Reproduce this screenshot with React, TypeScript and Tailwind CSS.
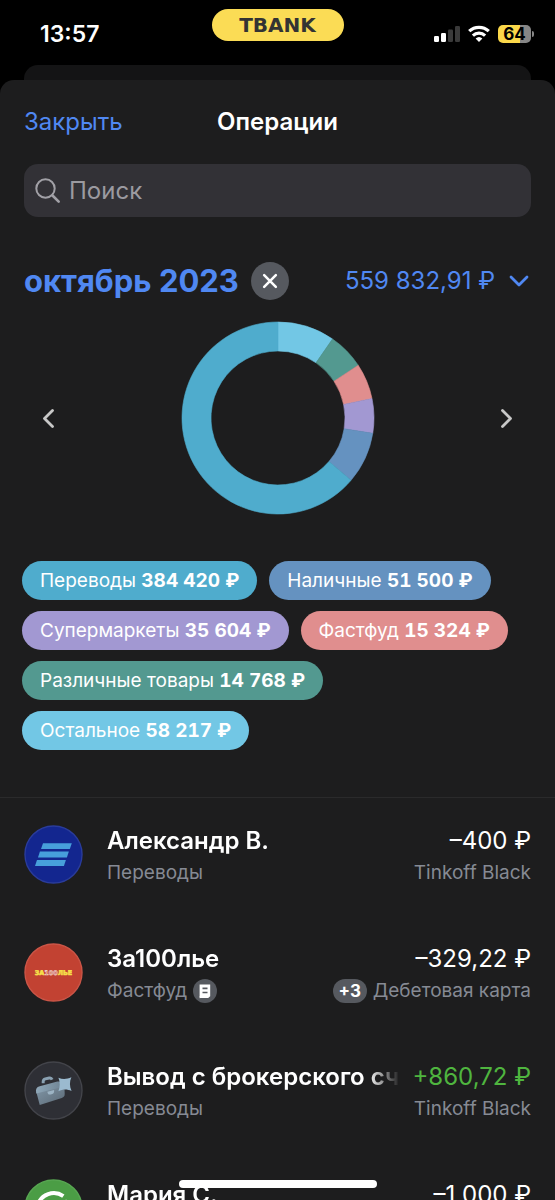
import type { ReactNode } from 'react'

interface Category {
  name: string
  amount: string
  chip: string
}

const CATEGORIES: Category[] = [
  { name: 'Переводы', amount: '384 420 ₽', chip: 'bg-[#4faccd]' },
  { name: 'Наличные', amount: '51 500 ₽', chip: 'bg-[#6592c0]' },
  { name: 'Супермаркеты', amount: '35 604 ₽', chip: 'bg-[#a298d2]' },
  { name: 'Фастфуд', amount: '15 324 ₽', chip: 'bg-[#e08e8e]' },
  { name: 'Различные товары', amount: '14 768 ₽', chip: 'bg-[#539990]' },
  { name: 'Остальное', amount: '58 217 ₽', chip: 'bg-[#72c7e5]' },
]

// Clockwise from twelve o'clock, small categories get a minimum visible angle
const SLICES = [
  { from: 0, to: 34.6, color: '#72c7e5' },
  { from: 34.6, to: 56.7, color: '#539990' },
  { from: 56.7, to: 78.3, color: '#e08e8e' },
  { from: 78.3, to: 99.2, color: '#a298d2' },
  { from: 99.2, to: 130.5, color: '#6592c0' },
  { from: 130.5, to: 360, color: '#4faccd' },
]

interface Operation {
  title: string
  amount: string
  income?: boolean
  category?: string
  account?: string
  receipt?: boolean
  bonus?: string
  logo: ReactNode
}

const OPERATIONS: Operation[] = [
  { title: 'Александр В.', amount: '–400 ₽', category: 'Переводы', account: 'Tinkoff Black', logo: <StripesLogo /> },
  {
    title: 'За100лье',
    amount: '–329,22 ₽',
    category: 'Фастфуд',
    account: 'Дебетовая карта',
    receipt: true,
    bonus: '+3',
    logo: <CanteenLogo />,
  },
  {
    title: 'Вывод с брокерского сч',
    amount: '+860,72 ₽',
    income: true,
    category: 'Переводы',
    account: 'Tinkoff Black',
    logo: <BriefcaseLogo />,
  },
  { title: 'Мария С.', amount: '–1 000 ₽', logo: <GreenLogo /> },
]

function StripesLogo() {
  return (
    <svg viewBox="0 0 60 60" className="size-[59px] shrink-0" aria-hidden="true">
      <circle cx="30" cy="30" r="29" fill="#13268f" stroke="#2a3c9b" strokeWidth="1.4" />
      <g fill="#479fdb">
        <path d="M19.3 18.6H48.600l-2 5.800H17.300z" />
        <path d="M16.200 27H45.600l-2 6H14.200z" />
        <path d="M13.200 35.600H42.600l-2 6.200H11.200z" />
      </g>
    </svg>
  )
}

function CanteenLogo() {
  return (
    <svg viewBox="0 0 60 60" className="size-[59px] shrink-0" aria-hidden="true">
      <circle cx="30" cy="30" r="29" fill="#c24232" stroke="#cb5547" strokeWidth="1.4" />
      <text
        x="30"
        y="32.6"
        textAnchor="middle"
        fontFamily="DejaVu Sans, sans-serif"
        fontWeight="700"
        fontSize="6.5"
        fill="#f6df4a"
        stroke="#f6df4a"
        strokeWidth="0.6"
      >
        ЗА
        <tspan fill="#c24232" stroke="#f3d9d0">
          100
        </tspan>
        ЛЬЕ
      </text>
    </svg>
  )
}

function BriefcaseLogo() {
  return (
    <svg viewBox="0 0 60 60" className="size-[59px] shrink-0" aria-hidden="true">
      <defs>
        <linearGradient id="case-body" x1="0" y1="0" x2="1" y2="1">
          <stop offset="0" stopColor="#8298a9" />
          <stop offset="1" stopColor="#5b6975" />
        </linearGradient>
        <linearGradient id="case-lid" x1="0" y1="0" x2="1" y2="0">
          <stop offset="0" stopColor="#8fa7b8" />
          <stop offset="1" stopColor="#6d8292" />
        </linearGradient>
      </defs>
      <circle cx="30" cy="30" r="29" fill="#2e2f35" stroke="#43444a" strokeWidth="1.4" />
      <path
        d="M19.500 22.600v-1.600c0-1.600.8-2.400 2.200-2.800l4-.9c1.400-.3 2.300.2 2.900 1.600"
        fill="none"
        stroke="#8aa1b2"
        strokeWidth="3"
      />
      <path d="M12.400 31 41 24l.4 9.600c.1 2.200-1 3.400-3 4L16 44.800z" fill="url(#case-body)" />
      <path d="M12.400 32c-.8-3.400.4-5.600 3.600-6.400l17-4.400c4-1 7 .8 8 4.800l-28.600 7z" fill="url(#case-lid)" />
      <path d="m23.800 31.300 6.800-1.700c.2 2.600-.4 3.800-2.600 4.300-2.600.6-4 .1-4.200-2.600z" fill="#9db4c4" />
      <path
        d="M35 17c4.200 2 8.600 1.600 13.200-.4-2 4.600-2 9 .2 14-4.800-2.200-8.800-2-13.400.2 1.800-5 1.800-9.200 0-13.800z"
        fill="#9bbacf"
      />
    </svg>
  )
}

function GreenLogo() {
  return (
    <svg viewBox="0 0 60 60" className="size-[59px] shrink-0" aria-hidden="true">
      <circle cx="30" cy="30" r="29" fill="#4b9d45" stroke="#57a651" strokeWidth="1.4" />
      <path d="M40 17.500A17 17 0 1 0 46 25" fill="none" stroke="#fff" strokeWidth="4" />
      <path d="m22 27 8 5 14-9.500" fill="none" stroke="#fff" strokeWidth="4" />
    </svg>
  )
}

function arcPath(from: number, to: number) {
  const point = (r: number, deg: number) => {
    const a = (deg * Math.PI) / 180
    return `${(97 + r * Math.sin(a)).toFixed(2)} ${(97 - r * Math.cos(a)).toFixed(2)}`
  }
  const large = to - from > 180 ? 1 : 0
  return `M${point(96, from)}A96 96 0 ${large} 1 ${point(96, to)}L${point(67, to)}A67 67 0 ${large} 0 ${point(67, from)}Z`
}

function Donut() {
  return (
    <svg viewBox="0 0 194 194" className="size-[194px]" role="img" aria-label="Расходы по категориям">
      {SLICES.map(s => (
        <path key={s.from} d={arcPath(s.from, s.to)} fill={s.color} stroke={s.color} strokeWidth="0.6" />
      ))}
    </svg>
  )
}

function Chevron({ d, className }: { d: string; className: string }) {
  return (
    <svg
      viewBox="0 0 20 20"
      className={className}
      fill="none"
      stroke="currentColor"
      strokeWidth="2.8"
      strokeLinecap="round"
      strokeLinejoin="round"
      aria-hidden="true"
    >
      <path d={d} />
    </svg>
  )
}

function StatusBar() {
  return (
    <div className="grid h-[65px] grid-cols-[1fr_auto_1fr] items-start px-[21px]">
      <span className="pt-[18px] pl-[19px] text-[23px] leading-8 font-semibold">13:57</span>
      <span className="mt-[9px] flex h-8 w-[132px] items-center justify-center rounded-full bg-[#fbdc55] font-['DejaVu_Sans',sans-serif] text-[20px] leading-8 font-bold text-[#333]">
        TBANK
      </span>
      <div className="flex items-center justify-end gap-2 pt-[25px]">
        <svg viewBox="0 0 26 18" className="h-[18px] w-[26px]" aria-hidden="true">
          <rect x="0" y="11" width="5" height="6" rx="1.2" fill="#fff" />
          <rect x="7" y="8" width="5" height="9" rx="1.2" fill="#fff" />
          <rect x="14" y="4.500" width="5" height="12.500" rx="1.2" fill="#3a3a3a" />
          <rect x="21" y="1" width="5" height="16" rx="1.2" fill="#3a3a3a" />
        </svg>
        <svg viewBox="0 0 22 18" className="h-[18px] w-[22px]" fill="none" stroke="#fff" strokeWidth="3.2" aria-hidden="true">
          <path d="M1.200 6.200a14.200 14.200 0 0 1 19.600 0" />
          <path d="M4.900 10.600a8.900 8.900 0 0 1 12.200 0" />
          <path d="M11 17 7.600 13.600a5 5 0 0 1 6.800 0z" fill="#fff" stroke="none" />
        </svg>
        <div className="flex items-center gap-px">
          <span className="h-[18px] w-[33px] rounded-[5px] bg-[linear-gradient(to_right,#fbd84a_66%,#868686_66%)] text-center text-[17px] leading-[18px] font-bold text-black">
            64
          </span>
          <span className="h-[6px] w-[2px] rounded-r-full bg-[#868686]" />
        </div>
      </div>
    </div>
  )
}

function OperationRow({ op }: { op: Operation }) {
  return (
    <li>
      <button type="button" className="flex w-full items-start gap-6 px-6 py-[27px] text-left">
        {op.logo}
        <span className="min-w-0 flex-1">
          <span className="flex gap-3 text-2xl leading-8">
            <span className="min-w-0 flex-1 overflow-hidden font-semibold whitespace-nowrap [mask-image:linear-gradient(to_right,black_calc(100%-32px),transparent)]">
              {op.title}
            </span>
            <span className={`whitespace-nowrap ${op.income ? 'text-[#4fb53f]' : ''}`}>{op.amount}</span>
          </span>
          <span className="flex h-8 items-center justify-between text-[19px] leading-8 text-[#868a94]">
            <span className="flex items-center gap-[6px]">
              {op.category}
              {op.receipt && (
                <svg viewBox="0 0 24 24" className="size-6" role="img" aria-label="Чек">
                  <circle cx="12" cy="12" r="12" fill="#56595f" />
                  <path d="M6.600 5.500h10.600v11.800l-2 1.600H8.400l-1.800-.6z" fill="#fff" />
                  <path d="M6.600 17.300v2l4-1z" fill="#fff" />
                  <path d="M9.500 9.300h5M9.500 13.500h5" stroke="#56595f" strokeWidth="1.700" />
                </svg>
              )}
            </span>
            <span className="flex items-center gap-[6px]">
              {op.bonus && (
                <span className="h-6 w-[34px] rounded-full bg-[#56595f] text-center text-[17px] leading-6 font-bold text-white">
                  {op.bonus}
                </span>
              )}
              {op.account}
            </span>
          </span>
        </span>
      </button>
    </li>
  )
}

export default function App() {
  return (
    <div className="flex h-screen flex-col overflow-hidden bg-black font-['Inter','Noto_Sans',sans-serif] text-white">
      <StatusBar />
      {/* Edge of the screen underneath the sheet */}
      <div className="mx-6 h-[15px] shrink-0 rounded-t-[14px] bg-[#141415]" />

      <main className="min-h-0 flex-1 overflow-hidden rounded-t-[14px] bg-[#1d1d1e]">
        <header className="grid h-[84px] grid-cols-[1fr_auto_1fr] items-center px-6 text-2xl leading-8">
          <button type="button" className="justify-self-start text-[#5088f2]">
            Закрыть
          </button>
          <h1 className="font-semibold">Операции</h1>
        </header>

        <label className="mx-6 flex h-[53px] items-center gap-2 rounded-[14px] bg-[#323136] px-[11px]">
          <svg
            viewBox="0 0 26 26"
            className="size-[26px] shrink-0"
            fill="none"
            stroke="#a1a0a6"
            strokeWidth="2"
            strokeLinecap="round"
            aria-hidden="true"
          >
            <circle cx="10.500" cy="10.500" r="9.200" />
            <path d="m17.500 17.500 6.200 6.200" strokeWidth="2.600" />
          </svg>
          <input
            type="search"
            aria-label="Поиск"
            placeholder="Поиск"
            className="min-w-0 flex-1 bg-transparent text-2xl leading-8 outline-none placeholder:text-[#9b9aa0]"
          />
        </label>

        <div className="mt-[45px] flex items-center justify-between pr-[26px] pl-6">
          <div className="flex items-center gap-3">
            <button type="button" className="text-[31px] leading-9 font-bold text-[#5088f2]">
              октябрь 2023
            </button>
            <button
              type="button"
              aria-label="Сбросить период"
              className="flex size-[38px] items-center justify-center rounded-full bg-[#56595f]"
            >
              <Chevron d="m3.500 3.500 13 13m0-13-13 13" className="size-[18px]" />
            </button>
          </div>
          <button type="button" className="flex items-center gap-[14px] text-2xl leading-8 text-[#5088f2]">
            559 832,91 ₽
            <Chevron d="m2 6 8 8 8-8" className="size-5" />
          </button>
        </div>

        <div className="mt-[21px] flex items-center justify-between px-[39px]">
          <button type="button" aria-label="Предыдущий месяц" className="text-[#c8c8c8]">
            <Chevron d="m13.500 2.500-8 8 8 8" className="size-5" />
          </button>
          <Donut />
          <button type="button" aria-label="Следующий месяц" className="text-[#c8c8c8]">
            <Chevron d="m6.500 2.500 8 8-8 8" className="size-5" />
          </button>
        </div>

        <div className="mt-[46px] flex flex-wrap gap-x-3 gap-y-[11px] px-[22px]">
          {CATEGORIES.map(c => (
            <button
              key={c.name}
              type="button"
              className={`h-[39px] rounded-full px-[18px] text-[19px] leading-[39px] whitespace-nowrap ${c.chip}`}
            >
              {c.name} <b className="font-bold tabular-nums">{c.amount}</b>
            </button>
          ))}
        </div>

        <ul className="mt-[47px] border-t border-[#2a2a2b]">
          {OPERATIONS.map(op => (
            <OperationRow key={op.title} op={op} />
          ))}
        </ul>
      </main>

      {/* Home indicator */}
      <div className="fixed bottom-3 left-1/2 h-2 w-[198px] -translate-x-1/2 rounded-full bg-white" />
    </div>
  )
}
